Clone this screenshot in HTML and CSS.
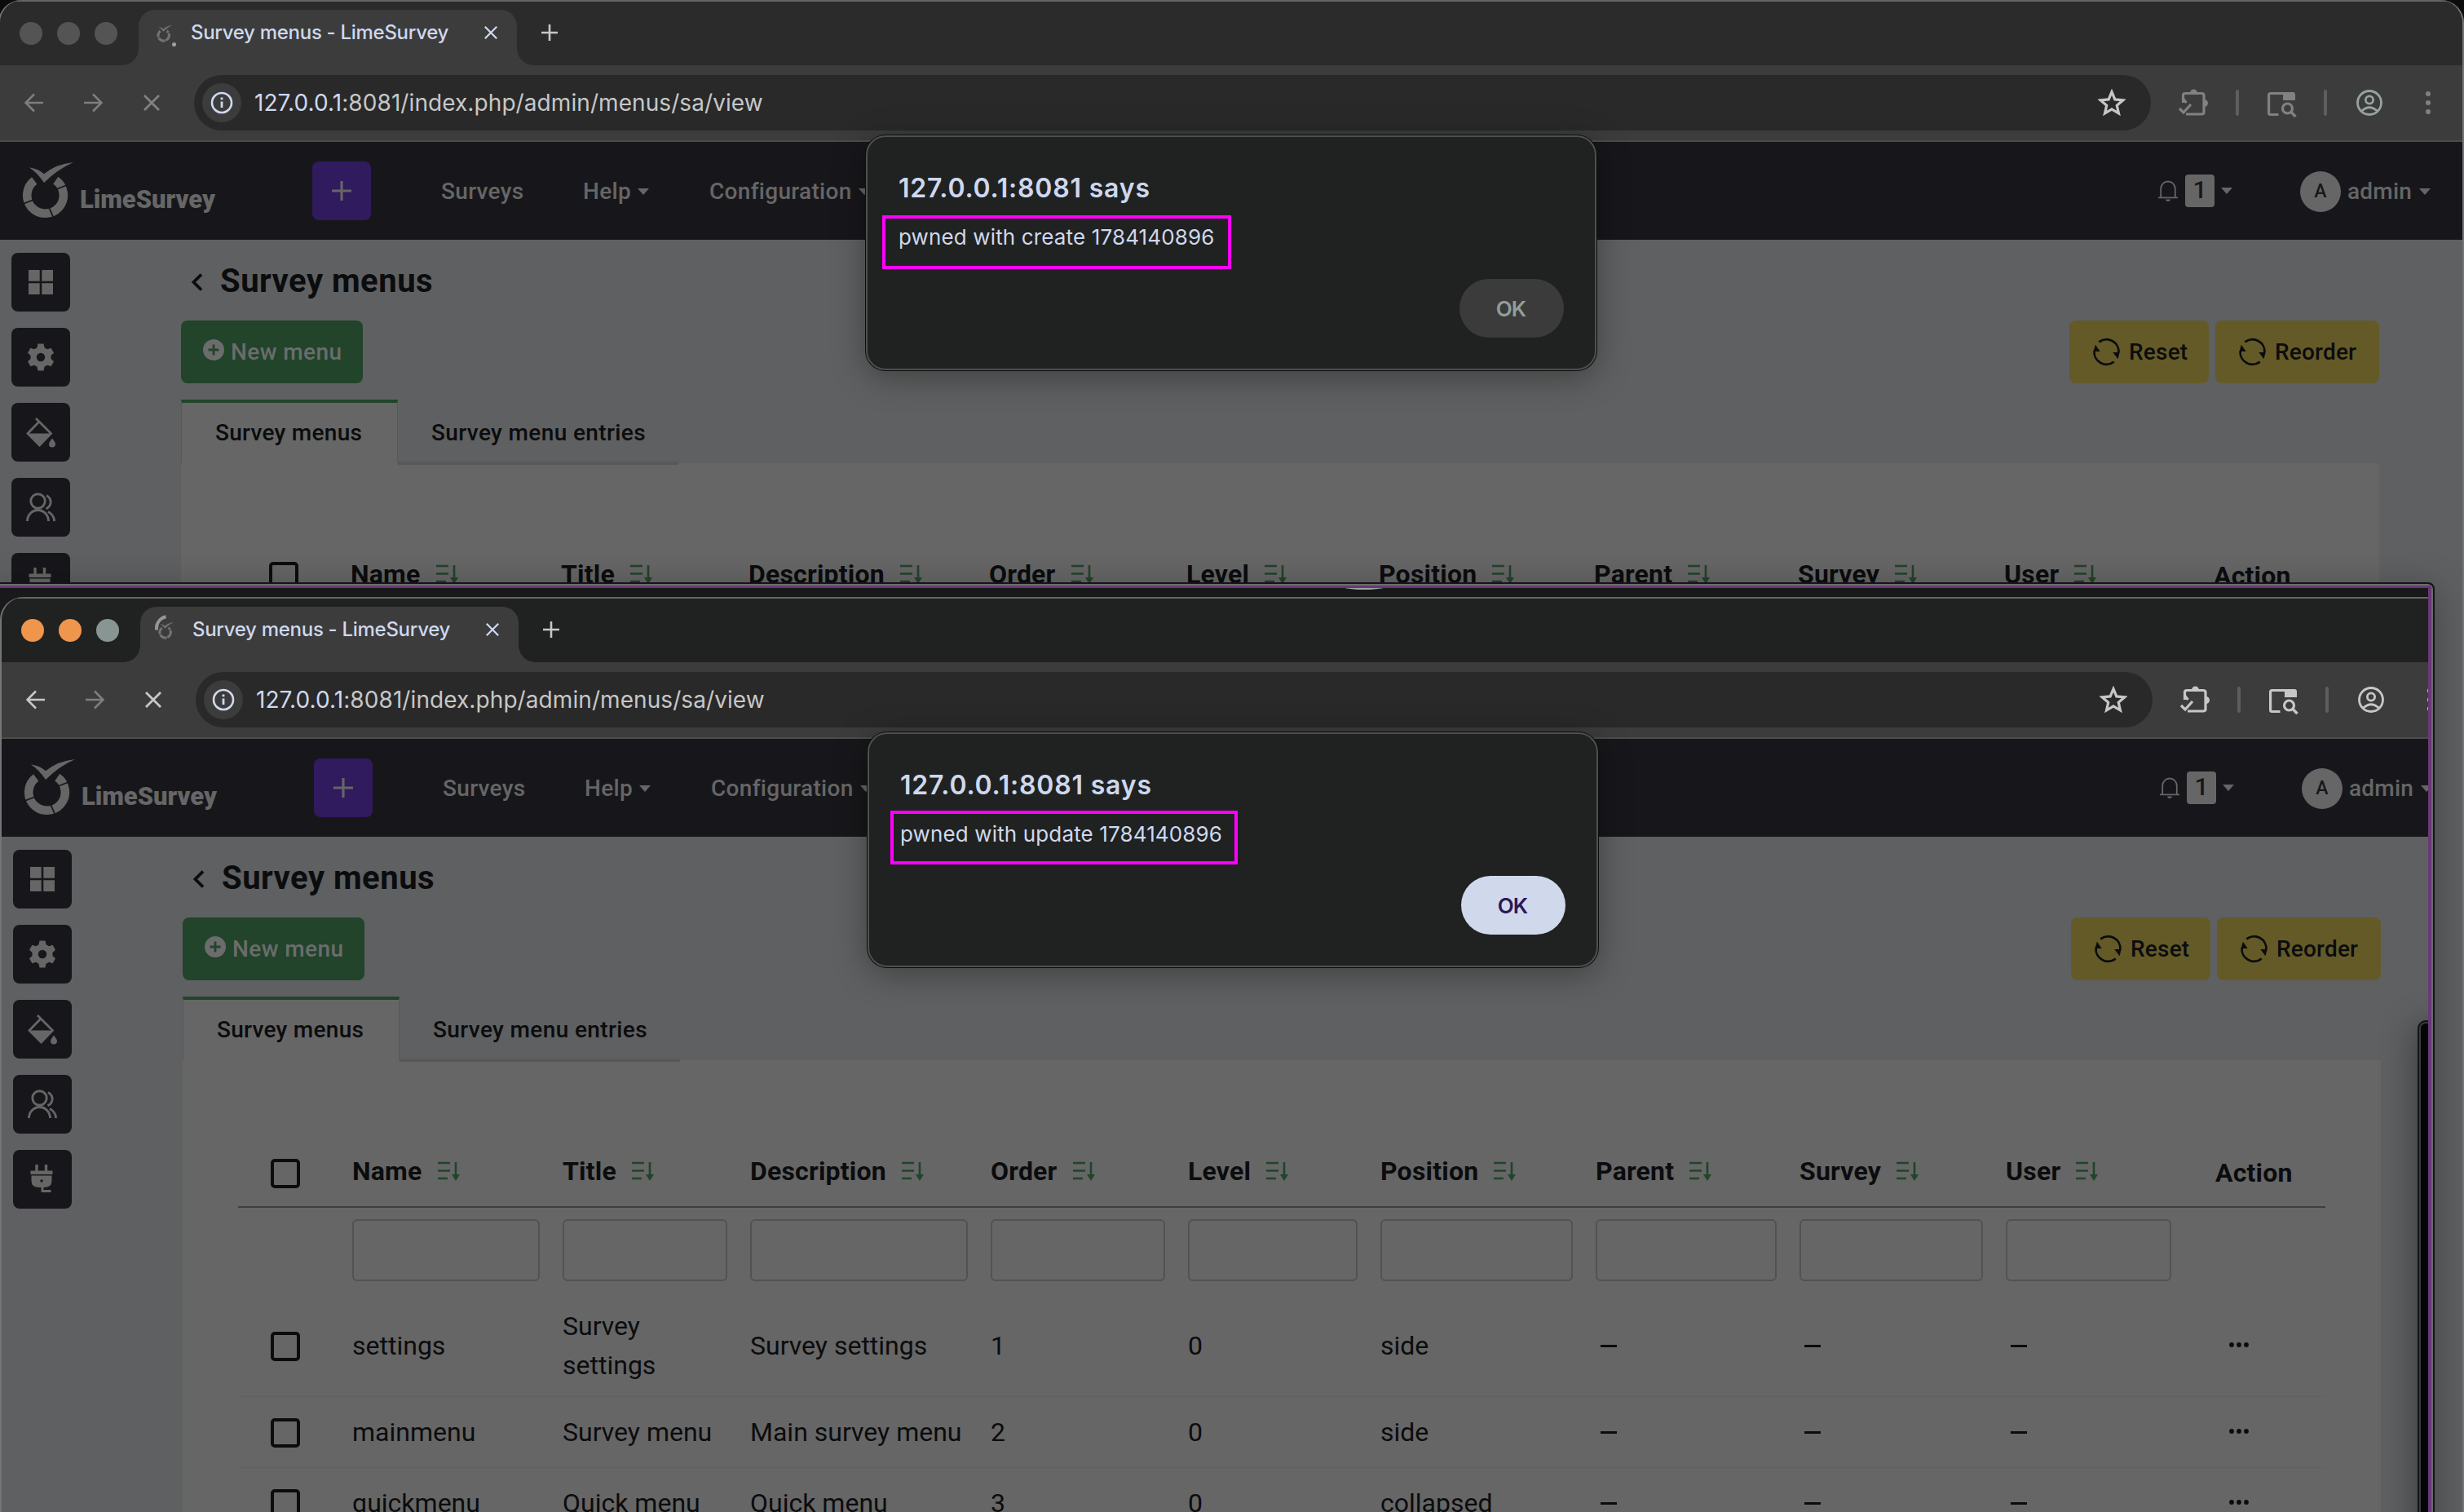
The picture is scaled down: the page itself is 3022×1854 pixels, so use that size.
FILE: index.html
```html
<!DOCTYPE html>
<html lang="en">
<head>
<meta charset="utf-8">
<title>Survey menus - LimeSurvey</title>
<link rel="stylesheet" href="styles.css">
</head>
<body>
<svg class="sprite" width="0" height="0" aria-hidden="true">
  <symbol id="lime" viewBox="0 0 66 72">
    <path d="M15.2 22.6A22.3 22.3 0 1 0 41.3 22.2" fill="none" stroke="currentColor" stroke-width="10.6"/>
    <path d="M8.7 6.3Q20 8 27 14.3Q42 2 63 0Q43 9 27 25Q19 13 8.7 6.3Z" fill="currentColor"/>
    <path class="cut" d="M41 33.5L55 28M32.5 54L39 69M13 46.5L0 51.5" fill="none" stroke-width="1.8"/>
  </symbol>
  <symbol id="back" viewBox="0 0 24 24"><path d="M23 12H2M12 1.5L1.5 12L12 22.5" fill="none" stroke="currentColor" stroke-width="2.6"/></symbol>
  <symbol id="forward" viewBox="0 0 24 24"><path d="M1 12H22M12 1.5L22.5 12L12 22.5" fill="none" stroke="currentColor" stroke-width="2.6"/></symbol>
  <symbol id="cross" viewBox="0 0 20 20"><path d="M1 1L19 19M19 1L1 19" fill="none" stroke="currentColor" stroke-width="2.8"/></symbol>
  <symbol id="plus" viewBox="0 0 20 20"><path d="M10 0V20M0 10H20" fill="none" stroke="currentColor" stroke-width="2.6"/></symbol>
  <symbol id="info" viewBox="0 0 28 28"><circle cx="14" cy="14" r="12" fill="none" stroke="currentColor" stroke-width="2.6"/><path d="M14 12.5V20M14 7.5V10.2" stroke="currentColor" stroke-width="2.8"/></symbol>
  <symbol id="star" viewBox="0 0 32 32"><path d="M16 3.5L19.6 12.2L29 13L21.9 19.2L24 28.3L16 23.5L8 28.3L10.1 19.2L3 13L12.4 12.2Z" fill="none" stroke="currentColor" stroke-width="3"/></symbol>
  <symbol id="puzzle" viewBox="0 0 38 36"><path d="M6.5 18V9Q6.500 6.500 9 6.500H29Q32 6.500 32 9V29.500Q32 32 29 32H10M6.500 13L10.500 18" fill="none" stroke="currentColor" stroke-width="3.200"/><path d="M15 6A4.500 4.500 0 0 1 24 6ZM32.500 14A4.500 4.500 0 0 1 32.500 23Z" fill="currentColor"/><path d="M2 25L7 30L16 20" fill="none" stroke="currentColor" stroke-width="3.200"/></symbol>
  <symbol id="panel" viewBox="0 0 38 34"><path d="M14.500 29.500H4.500Q2.600 29.500 2.600 27.500V5.500Q2.600 3.500 4.500 3.500H33" fill="none" stroke="currentColor" stroke-width="3.200"/><path d="M20 2H32Q35 2 35 5V12H20Z" fill="currentColor"/><circle cx="25.500" cy="22" r="6" fill="none" stroke="currentColor" stroke-width="3.200"/><path d="M30 26.500L35.500 32" stroke="currentColor" stroke-width="3.400"/></symbol>
  <symbol id="person" viewBox="0 0 34 34"><circle cx="17" cy="17" r="14.500" fill="none" stroke="currentColor" stroke-width="2.800"/><circle cx="17" cy="13.500" r="4.600" fill="none" stroke="currentColor" stroke-width="2.800"/><path d="M7.500 27Q17 18.500 26.500 27" fill="none" stroke="currentColor" stroke-width="2.800"/></symbol>
  <symbol id="bell" viewBox="0 0 24 28"><path d="M3.200 22V11.500A8.800 9 0 0 1 20.800 11.500V22M0 22.300H24" fill="none" stroke="currentColor" stroke-width="1.800"/><path d="M9 24.500H15Q14.500 27 12 27Q9.500 27 9 24.500Z" fill="currentColor"/></symbol>
  <symbol id="tiles" viewBox="0 0 30 30"><path d="M0 0H13.700V13.700H0ZM16.300 0H30V13.700H16.300ZM0 16.300H13.700V30H0ZM16.300 16.300H30V30H16.300Z" fill="currentColor"/></symbol>
  <symbol id="gear" viewBox="0 0 34 34"><path fill="currentColor" fill-rule="evenodd" d="M13.500 0.500H20.500L21.500 5.200L25 7.300L29.600 5.800L33 11.800L29.500 15V19L33 22.200L29.600 28.200L25 26.700L21.500 28.800L20.500 33.500H13.500L12.500 28.800L9 26.700L4.400 28.200L1 22.200L4.500 19V15L1 11.800L4.400 5.800L9 7.300L12.500 5.200ZM17 11.800A5.200 5.200 0 1 0 17 22.200A5.200 5.200 0 1 0 17 11.800Z"/></symbol>
  <symbol id="bucket" viewBox="0 0 38 38"><path d="M13 2L17.500 6.500L31.500 20.500L17.500 35L3 20.500L17 6" fill="none" stroke="currentColor" stroke-width="2.800"/><path d="M3 20.500H32L17.500 36Z" fill="currentColor"/><path d="M33 26.500Q37 31.500 37 33.500A4 4 0 0 1 29 33.500Q29 31.500 33 26.500Z" fill="currentColor"/></symbol>
  <symbol id="users" viewBox="0 0 38 38"><g fill="none" stroke="currentColor" stroke-width="2.900"><circle cx="15.500" cy="11.500" r="8.700"/><path d="M2.500 36A13 13.500 0 0 1 28.500 36M26 4.500Q32 8 31 14Q30 19 25.500 20.800M28 24.500Q35 28 35.700 36"/></g></symbol>
  <symbol id="plug" viewBox="0 0 30 36"><path d="M8 0V8M19.500 0V8" stroke="currentColor" stroke-width="3.400"/><path d="M0.500 7.500H27.500V12H0.500ZM1.500 13.500H26.500V20Q26.500 28 17 28H11Q1.500 28 1.500 20Z" fill="currentColor"/><path d="M15 27V32.500H25.500" fill="none" stroke="currentColor" stroke-width="3"/><circle class="cut-fill" cx="14" cy="20" r="1.700"/></symbol>
  <symbol id="chevron" viewBox="0 0 14 22"><path d="M12 1.500L2.500 11L12 20.500" fill="none" stroke="currentColor" stroke-width="3.800"/></symbol>
  <symbol id="add" viewBox="0 0 26 26"><path fill="currentColor" fill-rule="evenodd" d="M13 0A13 13 0 1 0 13 26A13 13 0 1 0 13 0ZM11.600 6.500H14.400V11.600H19.500V14.400H14.400V19.500H11.600V14.400H6.500V11.600H11.600Z"/></symbol>
  <symbol id="cycle" viewBox="0 0 36 36"><path d="M8.500 5.500A15.500 15.500 0 0 1 33.400 19M27.500 30.500A15.500 15.500 0 0 1 2.600 17" fill="none" stroke="currentColor" stroke-width="2.800"/><path d="M26 18.500H34.500L32.500 27ZM10 17.500H1.500L4 9Z" fill="currentColor"/></symbol>
  <symbol id="sort" viewBox="0 0 28 24"><path d="M0 2H15M0 11.500H15M0 21H12M22 1V18" fill="none" stroke="currentColor" stroke-width="2.600"/><path d="M17 16H27L22 24Z" fill="currentColor"/></symbol>
  <symbol id="dots" viewBox="0 0 24 6"><g fill="currentColor"><circle cx="3" cy="3" r="2.900"/><circle cx="12" cy="3" r="2.900"/><circle cx="21" cy="3" r="2.900"/></g></symbol>
</svg>

<section class="window window-back">
  <header class="tabstrip">
    <div class="lights"><i></i><i></i><i></i></div>
    <div class="tab">
      <span class="favicon"><svg><use href="#lime"/></svg></span>
      <span class="tab-title">Survey menus - LimeSurvey</span>
      <svg class="tab-close"><use href="#cross"/></svg>
    </div>
    <svg class="tab-new"><use href="#plus"/></svg>
  </header>
  <div class="toolbar">
    <svg class="nav-icon dim"><use href="#back"/></svg>
    <svg class="nav-icon dim"><use href="#forward"/></svg>
    <svg class="nav-icon stop"><use href="#cross"/></svg>
    <div class="omnibox">
      <span class="site-info"><svg><use href="#info"/></svg></span>
      <span class="url"><b>127.0.0.1</b>:8081/index.php/admin/menus/sa/view</span>
      <svg class="star"><use href="#star"/></svg>
    </div>
    <svg class="tool puzzle"><use href="#puzzle"/></svg>
    <i class="divider"></i>
    <svg class="tool panel-search"><use href="#panel"/></svg>
    <i class="divider"></i>
    <svg class="tool person"><use href="#person"/></svg>
    <span class="kebab"><i></i><i></i><i></i></span>
  </div>
  <nav class="navbar">
    <a class="brand"><svg><use href="#lime"/></svg><span>LimeSurvey</span></a>
    <a class="create"><svg><use href="#plus"/></svg></a>
    <a class="item surveys">Surveys</a>
    <a class="item help">Help<i class="caret"></i></a>
    <a class="item config">Configuration<i class="caret"></i></a>
    <a class="bell"><svg><use href="#bell"/></svg><span class="count">1</span><i class="caret"></i></a>
    <a class="account"><span class="initial">A</span>admin<i class="caret"></i></a>
  </nav>
  <div class="page">
    <aside class="sidebar">
      <a><svg class="s30"><use href="#tiles"/></svg></a>
      <a><svg class="s34"><use href="#gear"/></svg></a>
      <a><svg class="s38"><use href="#bucket"/></svg></a>
      <a><svg class="s38"><use href="#users"/></svg></a>
      <a><svg class="splug"><use href="#plug"/></svg></a>
    </aside>
    <main class="content">
      <h1><svg><use href="#chevron"/></svg>Survey menus</h1>
      <div class="actions">
        <a class="btn green"><svg><use href="#add"/></svg>New menu</a>
        <a class="btn yellow reset"><svg><use href="#cycle"/></svg>Reset</a>
        <a class="btn yellow reorder"><svg><use href="#cycle"/></svg>Reorder</a>
      </div>
      <div class="tabs"><a class="active">Survey menus</a><a class="other">Survey menu entries</a></div>
      <div class="panel">
        <div class="row head">
          <span class="pick"><i class="box"></i></span>
          <span>Name<svg><use href="#sort"/></svg></span>
          <span>Title<svg><use href="#sort"/></svg></span>
          <span>Description<svg><use href="#sort"/></svg></span>
          <span>Order<svg><use href="#sort"/></svg></span>
          <span>Level<svg><use href="#sort"/></svg></span>
          <span>Position<svg><use href="#sort"/></svg></span>
          <span>Parent<svg><use href="#sort"/></svg></span>
          <span>Survey<svg><use href="#sort"/></svg></span>
          <span>User<svg><use href="#sort"/></svg></span>
          <span class="action">Action</span>
        </div>
      </div>
    </main>
  </div>
  <div class="dialog">
    <h2>127.0.0.1:8081 says</h2>
    <p>pwned with create 1784140896</p>
    <button class="muted">OK</button>
    <div class="mark mark-create"></div>
  </div>
</section>

<div class="capture">
  <i class="sliver"></i>
  <section class="window window-front">
    <header class="tabstrip">
      <div class="lights"><i></i><i></i><i></i></div>
      <div class="tab">
        <span class="favicon loading"><svg><use href="#lime"/></svg></span>
        <span class="tab-title">Survey menus - LimeSurvey</span>
        <svg class="tab-close"><use href="#cross"/></svg>
      </div>
      <svg class="tab-new"><use href="#plus"/></svg>
    </header>
    <div class="toolbar">
      <svg class="nav-icon"><use href="#back"/></svg>
      <svg class="nav-icon dim"><use href="#forward"/></svg>
      <svg class="nav-icon stop"><use href="#cross"/></svg>
      <div class="omnibox">
        <span class="site-info"><svg><use href="#info"/></svg></span>
        <span class="url"><b>127.0.0.1</b>:8081/index.php/admin/menus/sa/view</span>
        <svg class="star"><use href="#star"/></svg>
      </div>
      <svg class="tool puzzle"><use href="#puzzle"/></svg>
      <i class="divider"></i>
      <svg class="tool panel-search"><use href="#panel"/></svg>
      <i class="divider"></i>
      <svg class="tool person"><use href="#person"/></svg>
      <span class="kebab"><i></i><i></i><i></i></span>
    </div>
    <nav class="navbar">
      <a class="brand"><svg><use href="#lime"/></svg><span>LimeSurvey</span></a>
      <a class="create"><svg><use href="#plus"/></svg></a>
      <a class="item surveys">Surveys</a>
      <a class="item help">Help<i class="caret"></i></a>
      <a class="item config">Configuration<i class="caret"></i></a>
      <a class="bell"><svg><use href="#bell"/></svg><span class="count">1</span><i class="caret"></i></a>
      <a class="account"><span class="initial">A</span>admin<i class="caret"></i></a>
    </nav>
    <div class="page">
      <aside class="sidebar">
        <a><svg class="s30"><use href="#tiles"/></svg></a>
        <a><svg class="s34"><use href="#gear"/></svg></a>
        <a><svg class="s38"><use href="#bucket"/></svg></a>
        <a><svg class="s38"><use href="#users"/></svg></a>
        <a><svg class="splug"><use href="#plug"/></svg></a>
      </aside>
      <main class="content">
        <h1><svg><use href="#chevron"/></svg>Survey menus</h1>
        <div class="actions">
          <a class="btn green"><svg><use href="#add"/></svg>New menu</a>
          <a class="btn yellow reset"><svg><use href="#cycle"/></svg>Reset</a>
          <a class="btn yellow reorder"><svg><use href="#cycle"/></svg>Reorder</a>
        </div>
        <div class="tabs"><a class="active">Survey menus</a><a class="other">Survey menu entries</a></div>
        <div class="panel">
          <div class="row head">
            <span class="pick"><i class="box"></i></span>
            <span>Name<svg><use href="#sort"/></svg></span>
            <span>Title<svg><use href="#sort"/></svg></span>
            <span>Description<svg><use href="#sort"/></svg></span>
            <span>Order<svg><use href="#sort"/></svg></span>
            <span>Level<svg><use href="#sort"/></svg></span>
            <span>Position<svg><use href="#sort"/></svg></span>
            <span>Parent<svg><use href="#sort"/></svg></span>
            <span>Survey<svg><use href="#sort"/></svg></span>
            <span>User<svg><use href="#sort"/></svg></span>
            <span class="action">Action</span>
          </div>
          <div class="row filter">
            <span></span><span><i></i></span><span><i></i></span><span><i></i></span><span><i></i></span><span><i></i></span><span><i></i></span><span><i></i></span><span><i></i></span><span><i></i></span><span></span>
          </div>
          <div class="row tall">
            <span class="pick"><i class="box"></i></span><span>settings</span><span>Survey settings</span><span>Survey settings</span><span>1</span><span>0</span><span>side</span>
            <span><i class="dash"></i></span><span><i class="dash"></i></span><span><i class="dash"></i></span><span class="more"><svg><use href="#dots"/></svg></span>
          </div>
          <div class="row">
            <span class="pick"><i class="box"></i></span><span>mainmenu</span><span>Survey menu</span><span>Main survey menu</span><span>2</span><span>0</span><span>side</span>
            <span><i class="dash"></i></span><span><i class="dash"></i></span><span><i class="dash"></i></span><span class="more"><svg><use href="#dots"/></svg></span>
          </div>
          <div class="row">
            <span class="pick"><i class="box"></i></span><span>quickmenu</span><span>Quick menu</span><span>Quick menu</span><span>3</span><span>0</span><span>collapsed</span>
            <span><i class="dash"></i></span><span><i class="dash"></i></span><span><i class="dash"></i></span><span class="more"><svg><use href="#dots"/></svg></span>
          </div>
        </div>
      </main>
    </div>
    <div class="dialog">
      <h2>127.0.0.1:8081 says</h2>
      <p>pwned with update 1784140896</p>
      <button>OK</button>
      <div class="mark mark-update"></div>
    </div>
  </section>
  <div class="overlay-window"></div>
</div>
</body>
</html>
```
FILE: styles.css
```css
*, *::before, *::after { box-sizing: border-box; }
html, body { margin: 0; height: 1854px; overflow: hidden; background: #0c0c0d; }
body { position: relative; width: 3022px; font-family: Roboto, "Open Sans", sans-serif; color: #0b0c0e; }
svg { display: block; flex: none; overflow: visible; }
i { display: block; flex: none; font-style: normal; }
.sprite { position: absolute; }

/* desktop windows */
.window { position: absolute; width: 3020px; height: 1854px; overflow: hidden; border-radius: 28px 28px 0 0; background: #5f6061; box-shadow: 2px 0 #747577, -2px 0 #747577; }
.window-back { left: 0; top: 0; }
.window-front { left: 2px; top: 11px; }
.capture { position: absolute; left: 0; top: 718px; width: 2982px; height: 1136px; overflow: hidden; border-top: 3px solid #6a3877; border-right: 4px solid #6a3877; border-top-right-radius: 4px; background: #19191b; }
.window-back::after { content: ""; position: absolute; left: -8px; top: 714px; width: 2994px; height: 1200px; border-radius: 8px; background: #151517; border: 2px solid #151517; box-shadow: inset 0 0 0 2px #6a6b6c, 6px 4px 44px rgba(0, 0, 0, .24); }
.sliver { position: absolute; left: 1646px; top: -2px; width: 54px; height: 4px; border-radius: 0 0 27px 27px / 0 0 4px 4px; background: #9aa5a8; }
.overlay-window { position: absolute; left: 2965px; top: 530px; width: 60px; height: 700px; border: 2px solid #131517; border-radius: 10px; background: #030506; box-shadow: inset 0 0 0 2px #3a3c3d, -4px 6px 40px rgba(0, 0, 0, .35); }

/* tab strip */
.tabstrip { display: flex; align-items: flex-start; height: 80px; background: #2b2b2b; border-top: 2px solid #666; }
.window-front .tabstrip { background: #202221; }
.lights { display: flex; gap: 18px; padding: 25px 0 0 24px; width: 170px; }
.lights i { width: 28px; height: 28px; border-radius: 50%; background: #545454; }
.window-front .lights i { background: #ef954c; }
.window-front .lights i:last-child { background: #879692; }
.tab { position: relative; display: flex; align-items: center; width: 464px; height: 68px; margin-top: 10px; padding-bottom: 12px; border-radius: 20px 20px 0 0; background: #3c3c3c; }
.tab::before, .tab::after { content: ""; position: absolute; bottom: 0; width: 20px; height: 20px; }
.tab::before { left: -20px; background: radial-gradient(circle at 0 0, transparent 19.5px, #3c3c3c 20px); }
.tab::after { right: -20px; background: radial-gradient(circle at 100% 0, transparent 19.5px, #3c3c3c 20px); }
.favicon { position: relative; width: 30px; height: 26px; margin-left: 18px; color: #727272; }
.favicon svg { width: 20px; height: 22px; margin: 4px 0 0 4px; }
.favicon::after { content: ""; position: absolute; right: 2px; bottom: -4px; width: 5px; height: 5px; border-radius: 50%; background: #9aa3a1; }
.favicon.loading::after { right: auto; bottom: auto; left: 0; top: -5px; width: 32px; height: 32px; border: 4px solid transparent; border-left-color: #8f9a97; background: none; transform: rotate(35deg); }
.tab-title { margin-left: 16px; width: 358px; font: 500 24px/60px Inter, sans-serif; letter-spacing: -.29px; color: #ced8ee; white-space: nowrap; }
.tab-close { width: 16px; height: 16px; margin-left: 2px; color: #ced8ee; }
.tab-new { width: 20px; height: 20px; margin: 28px 0 0 30px; color: #c7c7c7; }

/* toolbar */
.toolbar { display: flex; align-items: center; height: 94px; padding-left: 30px; background: #3c3c3c; border-bottom: 2px solid #4c4c4c; color: #c7c7c7; }
.window-back .toolbar { color: #818181; }
.nav-icon { width: 24px; height: 24px; margin-right: 48px; }
.nav-icon.dim { color: #7e7e7e; }
.nav-icon.stop { width: 20px; height: 20px; margin: 0 42px 0 2px; }
.omnibox { display: flex; align-items: center; width: 2400px; height: 68px; padding-left: 10px; border-radius: 34px; background: #292929; color: #c7c7c7; }
.site-info { display: flex; align-items: center; justify-content: center; width: 48px; height: 48px; border-radius: 50%; background: #3c3c3c; color: #ced8ee; }
.site-info svg { width: 28px; height: 28px; }
.url { margin-left: 16px; font: 400 28px/68px Inter, sans-serif; letter-spacing: .08px; white-space: nowrap; }
.url b { font-weight: 400; color: #ced8ee; }
.star { width: 34px; height: 34px; margin: 0 31px 0 auto; }
.tool { margin-top: -1px; }
.puzzle { width: 38px; height: 36px; margin-left: 33px; }
.divider { width: 4px; height: 32px; border-radius: 2px; background: #5d5e60; }
.puzzle + .divider { margin-left: 33px; }
.panel-search { width: 38px; height: 34px; margin: 3px 32px 0 34px; }
.person { width: 34px; height: 34px; margin-left: 35px; }
.window-back .person { color: #96a3a1; }
.kebab { display: flex; flex-direction: column; gap: 5px; margin-left: 52px; }
.kebab i { width: 6px; height: 6px; border-radius: 50%; background: currentColor; }

/* application navbar */
.navbar { display: flex; align-items: center; height: 120px; padding-left: 27px; background: #17171b; color: #666; font: 500 28px/40px Roboto, sans-serif; white-space: nowrap; }
.navbar a { display: flex; align-items: center; }
.brand { width: 356px; }
.brand svg { width: 66px; height: 72px; margin-top: 2px; }
.brand span { margin: 22px 0 0 5px; font-size: 31px; font-weight: 900; letter-spacing: -.05px; }
.cut { stroke: #17171b; }
.cut-fill { fill: #17171b; }
.create { justify-content: center; width: 72px; height: 72px; border-radius: 8px; background: #2f1b5e; }
.create svg { width: 24px; height: 24px; }
.item { padding-top: 1px; }
.surveys { width: 174px; margin-left: 86px; letter-spacing: .3px; }
.help { width: 155px; letter-spacing: .3px; }
.config { letter-spacing: .3px; }
.caret { border: 7.5px solid transparent; border-top: 8px solid #666; border-bottom: 0; margin-left: 8px; }
.bell { width: 174px; margin-left: auto; }
.bell svg { width: 24px; height: 28px; }
.count { width: 36px; height: 40px; margin-left: 9px; border-radius: 4px; background: #666; color: #17171b; font-size: 30px; line-height: 37px; text-align: center; }
.account { margin-right: 39px; padding-top: 1px; letter-spacing: .2px; }
.account .caret { margin-left: 9px; }
.initial { width: 50px; height: 50px; margin-right: 8px; border-radius: 50%; background: #666; color: #17171b; font-size: 23px; line-height: 50px; text-align: center; }

/* page */
.page { display: flex; height: 1560px; }
.sidebar { display: flex; flex-direction: column; gap: 20px; width: 222px; padding: 16px 14px; }
.sidebar a { display: flex; align-items: center; justify-content: center; width: 72px; height: 72px; border-radius: 8px; background: #17171b; color: #666; }
.s30 { width: 30px; height: 30px; }
.s34 { width: 34px; height: 34px; }
.s38 { width: 38px; height: 38px; }
.splug { width: 30px; height: 36px; }
.content { display: flex; flex-direction: column; width: 2696px; }
h1 { display: flex; align-items: center; gap: 21px; height: 99px; margin: 0; padding: 2px 0 0 13px; font-size: 40px; font-weight: 700; letter-spacing: .5px; white-space: nowrap; }
h1 svg { width: 14px; height: 22px; margin-top: 2px; }
.actions { display: flex; height: 77px; margin-bottom: 20px; }
.btn { display: flex; align-items: center; border-radius: 8px; font-size: 28px; font-weight: 500; white-space: nowrap; }
.green { width: 223px; padding-left: 27px; gap: 8px; margin-right: auto; background: #21442a; color: #6c6c6c; letter-spacing: .4px; }
.green svg { width: 26px; height: 26px; margin-top: -5px; }
.yellow { gap: 10px; padding-left: 28px; background: #645a28; letter-spacing: .2px; }
.yellow svg { width: 35px; height: 35px; }
.reset { width: 171px; }
.reorder { width: 201px; margin-left: 8px; }
.tabs { display: flex; height: 78px; font-size: 28px; font-weight: 500; line-height: 74px; letter-spacing: .28px; white-space: nowrap; }
.tabs a.active { width: 266px; padding-left: 41px; border: 1px solid #575859; border-top: 4px solid #21442a; border-bottom: 0; background: #666; }
.tabs a.other { position: relative; width: 344px; height: 80px; padding: 4px 0 0 41px; border-bottom: 4px solid #585858; letter-spacing: .38px; }
.panel { flex: 1; padding: 93px 68px 0; background: #666; font-size: 32px; }
.row { display: grid; grid-template-columns: 126px 258px 230px 295px 242px 236px 264px 250px 253px 231px 175px; align-items: center; height: 87px; border-bottom: 1px solid #616161; line-height: 48px; }
.row > span { padding: 0 14px; }
.row > .pick { padding-left: 40px; }
.box { width: 36px; height: 36px; margin-top: 2px; border: 4px solid #0b0c0e; border-radius: 5px; }
.head { height: 88px; border-bottom: 2px solid #3d3e3e; font-weight: 700; letter-spacing: .2px; }
.head > span { display: flex; align-items: center; }
.head .box { margin-top: 6px; }
.head svg { width: 28px; height: 24px; margin-left: 19px; color: #21442a; }
.head > .action { padding: 3px 0 0 40px; }
.filter { height: 104px; border: 0; }
.filter > span { padding: 0 14px; }
.filter i { height: 76px; border: 2px solid #525252; border-radius: 6px; }
.tall { height: 128px; padding-top: 3px; }
.dash { width: 20px; height: 3px; margin-left: 6px; background: #0b0c0e; }
.more svg { width: 24px; height: 6px; margin: -3px 0 0 43px; }

/* browser alert */
.dialog { position: absolute; z-index: 2; left: 1062px; top: 166px; width: 896px; height: 288px; padding: 43px 38px 0; border: 2px solid #4d504f; border-radius: 24px; background: #202221; color: #ced8ee; font-family: Inter, sans-serif; box-shadow: 0 0 0 1px #0c0d0d, 0 8px 40px rgba(0, 0, 0, .35); white-space: nowrap; }
h2 { margin: 0; font-size: 32px; font-weight: 600; line-height: 40px; letter-spacing: .8px; }
p { margin: 22px 0 0; font-size: 26px; line-height: 36px; letter-spacing: .14px; }
button { display: block; width: 128px; height: 72px; margin: 33px 0 0 auto; padding: 0 2px 0 0; border: 0; border-radius: 36px; background: #d0d9ec; color: #2b1757; font: 600 26px/73px Inter, sans-serif; letter-spacing: -.8px; }
button.muted { background: #3b3b3b; color: #919e9a; }
.mark { position: absolute; border: 4px solid #f0f; }
.mark-create { left: 18px; top: 96px; width: 428px; height: 66px; }
.mark-update { left: 26px; top: 94px; width: 426px; height: 66px; }
```
